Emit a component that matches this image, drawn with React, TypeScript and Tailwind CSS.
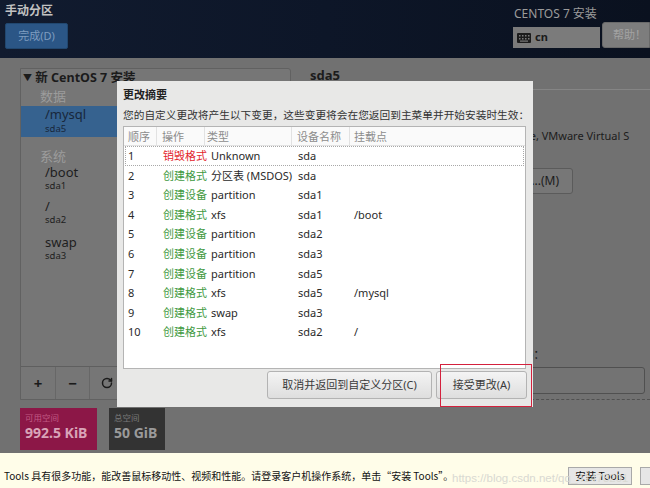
import React from 'react'
import { RotateCw } from 'lucide-react'

const ROWS: [string, 'red' | 'green', string, string, string][] = [
  ['1', 'red', '销毁格式', 'Unknown', 'sda'],
  ['2', 'green', '创建格式', '分区表 (MSDOS)', 'sda'],
  ['3', 'green', '创建设备', 'partition', 'sda1'],
  ['4', 'green', '创建格式', 'xfs', 'sda1'],
  ['5', 'green', '创建设备', 'partition', 'sda2'],
  ['6', 'green', '创建设备', 'partition', 'sda3'],
  ['7', 'green', '创建设备', 'partition', 'sda5'],
  ['8', 'green', '创建格式', 'xfs', 'sda5'],
  ['9', 'green', '创建格式', 'swap', 'sda3'],
  ['10', 'green', '创建格式', 'xfs', 'sda2'],
]

const MOUNTS: Record<string, string> = { '4': '/boot', '8': '/mysql', '10': '/' }

const MOUNT_POINTS = [
  { path: '/boot', dev: 'sda1', top: 'mt-[0px]' },
  { path: '/', dev: 'sda2', top: 'mt-[6px]' },
  { path: 'swap', dev: 'sda3', top: 'mt-[8px]' },
]

function KeyboardIcon() {
  return (
    <svg width="14" height="10" viewBox="0 0 14 10">
      <rect x="0" y="0" width="14" height="10" rx="1" fill="#1c1c1c" />
      <g fill="#7b7b7b">
        <rect x="2" y="2" width="1.5" height="1.5" />
        <rect x="5" y="2" width="1.5" height="1.5" />
        <rect x="8" y="2" width="1.5" height="1.5" />
        <rect x="11" y="2" width="1.5" height="1.5" />
        <rect x="2" y="5" width="1.5" height="1.5" />
        <rect x="5" y="5" width="1.5" height="1.5" />
        <rect x="8" y="5" width="1.5" height="1.5" />
        <rect x="11" y="5" width="1.5" height="1.5" />
        <rect x="3" y="7.5" width="8" height="1.2" />
      </g>
    </svg>
  )
}

function SummaryDialog() {
  return (
    <div className="absolute left-[117px] top-[81px] w-[416px] h-[326px] bg-[#e8e8e7] px-[6px] pt-[7px] text-[#2b2b2b]">
      <div className="text-[11px] leading-[14px] font-bold text-[#222]">更改摘要</div>
      <div className="mt-[6px] text-[10.7px] leading-[14px] whitespace-nowrap text-[#333]">
        您的自定义更改将产生以下变更，这些变更将会在您返回到主菜单并开始安装时生效：
      </div>

      {/* 表格 */}
      <div className="mt-[4px] w-[403px] h-[243px] bg-white border border-[#b4b4b4]">
        <div className="grid grid-cols-[33px_48px_87px_58px_1fr] h-[19px] bg-[#fafafa] border-b border-[#e2e2e2] text-[11px] leading-[19px] text-[#8c8c8c]">
          <div className="pl-[4px] border-r border-[#e2e2e2]">顺序</div>
          <div className="pl-[5px] border-r border-[#e2e2e2]">操作</div>
          <div className="pl-[2px] border-r border-[#e2e2e2]">类型</div>
          <div className="pl-[5px] border-r border-[#e2e2e2]">设备名称</div>
          <div className="pl-[4px]">挂载点</div>
        </div>
        {ROWS.map(([n, color, op, type, dev]) => (
          <div
            key={n}
            className={`grid grid-cols-[33px_48px_87px_58px_1fr] h-[19.6px] text-[11px] leading-[18px] text-[#2a2a2a] ${
              n === '1' ? 'mx-[1px] border border-dotted border-[#a8a8a8]' : 'mx-[1px] border border-transparent'
            }`}
          >
            <div className="pl-[2px]">{n}</div>
            <div className={`pl-[4px] ${color === 'red' ? 'text-[#e3262e]' : 'text-[#3f9a3f]'}`}>{op}</div>
            <div className="pl-[4px] whitespace-nowrap">{type}</div>
            <div className="pl-[4px]">{dev}</div>
            <div className="pl-[2px]">{MOUNTS[n] ?? ''}</div>
          </div>
        ))}
      </div>

      {/* 按钮 */}
      <div className="mt-[2px] flex justify-end gap-[4px]">
        <button className="w-[165px] h-[28px] rounded-[3px] border border-[#b3b3b3] bg-gradient-to-b from-[#f4f4f4] to-[#dedede] text-[11px] text-[#3a3a3a]">
          取消并返回到自定义分区(C)
        </button>
        <button className="w-[91px] h-[28px] rounded-[3px] border border-[#b3b3b3] bg-gradient-to-b from-[#f4f4f4] to-[#dedede] text-[11px] text-[#3a3a3a]">
          接受更改(A)
        </button>
      </div>
    </div>
  )
}

export default function App() {
  return (
    <div className="relative w-[650px] h-[488px] overflow-hidden font-['Noto_Sans','Noto_Sans_CJK_SC',sans-serif] bg-[#717171]">
      {/* 顶栏 */}
      <div className="h-[58px] flex justify-between bg-gradient-to-r from-[#111b2f] via-[#0d1628] to-[#0a111f]">
        <div className="pl-[5px] pt-[3px]">
          <div className="text-[12px] leading-[16px] font-bold text-[#c2c2c2]">手动分区</div>
          <button className="mt-[4px] w-[63px] h-[26px] rounded-[2px] bg-[#2b5686] border border-[#21476f] text-[11px] text-[#7f9dc0]">
            完成(D)
          </button>
        </div>
        <div className="w-[137px] pt-[6px]">
          <div className="pl-[1px] text-[12px] leading-[16px] text-[#9b9b9b]">CENTOS 7 安装</div>
          <div className="flex items-end">
            <div className="w-[87px] h-[21px] bg-[#7b7b7b] flex items-center gap-[4px] pl-[4px]">
              <KeyboardIcon />
              <span className="text-[11px] font-bold text-[#1a1a1a]">cn</span>
            </div>
            <button className="ml-[2px] w-[48px] h-[26px] rounded-l-[3px] bg-[#7d7d7d] border border-[#6a6a6a] text-[11px] text-[#a3a3a3] text-left pl-[10px]">
              帮助！
            </button>
          </div>
        </div>
      </div>

      {/* 主区域 */}
      <div className="h-[395px] flex">
        <div className="pl-[20px] pt-[10px]">
          <div className="w-[271px] h-[332px] bg-[#767676] border border-[#616161] rounded-tr-[3px] flex flex-col">
            <div className="flex-1">
              <div className="pl-[2px] pt-[1px] text-[12.5px] leading-[16px] font-bold text-[#1b1b1b] whitespace-nowrap">
                <span className="text-[9px] align-[1px]">▼</span> 新 CentOS 7 安装
              </div>
              <div className="pl-[19px] mt-[2px] text-[13px] leading-[16px] text-[#9c9c9c]">数据</div>
              <div className="mt-[2px] h-[31px] bg-[#36628f] pl-[24px]">
                <div className="text-[13px] leading-[17px] text-[#18273b]">/mysql</div>
                <div className="text-[9.5px] leading-[12px] text-[#18273b]">sda5</div>
              </div>
              <div className="pl-[19px] mt-[11px] text-[13px] leading-[16px] text-[#9c9c9c]">系统</div>
              {MOUNT_POINTS.map((m) => (
                <div key={m.path} className={`pl-[24px] ${m.top}`}>
                  <div className="text-[13px] leading-[16px] text-[#1e1e1e]">{m.path}</div>
                  <div className="text-[9.5px] leading-[12px] text-[#1e1e1e]">{m.dev}</div>
                </div>
              ))}
            </div>
            <div className="h-[33px] border-t border-[#5f5f5f] flex">
              <div className="w-[35px] border-r border-[#676767] flex items-center justify-center text-[15px] font-bold text-[#1b1b1b]">+</div>
              <div className="w-[34px] border-r border-[#676767] flex items-center justify-center text-[15px] font-bold text-[#1b1b1b]">−</div>
              <div className="w-[34px] border-r border-[#676767] flex items-center justify-center text-[#1b1b1b]">
                <RotateCw size={12} strokeWidth={3} />
              </div>
            </div>
          </div>
          <div className="mt-[8px] flex gap-[12px]">
            <div className="w-[77px] h-[42px] bg-[#8c1747] pl-[5px] pt-[4px]">
              <div className="text-[8.5px] leading-[11px] text-[#c15a85]">可用空间</div>
              <div className="text-[14px] leading-[20px] font-bold text-[#d9a4b8] whitespace-nowrap">992.5 KiB</div>
            </div>
            <div className="w-[56px] h-[42px] bg-[#333333] pl-[5px] pt-[4px]">
              <div className="text-[8.5px] leading-[11px] text-[#7a7a7a]">总空间</div>
              <div className="text-[14px] leading-[20px] font-bold text-[#9a9a9a] whitespace-nowrap">50 GiB</div>
            </div>
          </div>
        </div>

        {/* 右侧详情 */}
        <div className="flex-1 pl-[19px] pt-[9px] text-[#1c1c1c]">
          <div className="text-[13px] leading-[16px] font-bold">sda5</div>
          <div className="mt-[6px] h-px bg-[#858585]" />
          <div className="mt-[38px] pl-[184px] text-[11px] leading-[16px] whitespace-nowrap">VMware, VMware Virtual S</div>
          <div className="mt-[24px] ml-[150px] w-[113px] h-[26px] rounded-[3px] border border-[#5b5b5b] bg-[#777] text-[12px] leading-[24px] text-[#1c1c1c] text-right pr-[13px]">
            修改...(M)
          </div>
          <div className="mt-[154px] pl-[183px] text-[12px] leading-[14px] whitespace-nowrap">名称(N)：</div>
          <div className="mt-[5px] ml-[100px] w-[235px] h-[27px] rounded-[3px] border border-[#505050] bg-[#737373]" />
          <div className="mt-[5px] ml-[100px] border-t border-dashed border-[#505050]" />
        </div>
      </div>

      {/* VMware 提示条 */}
      <div className="h-[35px] bg-[#fffde9] flex items-end pb-[3px] font-['Noto_Sans_CJK_SC',sans-serif]">
        <div className="pl-[4px] pb-[2px] text-[10px] leading-[14px] text-[#111] whitespace-nowrap">
          Tools 具有很多功能，能改善鼠标移动性、视频和性能。请登录客户机操作系统，单击“安装 Tools”。
        </div>
        <div className="flex-1" />
        <button className="w-[64px] h-[18px] bg-[#e6e6e6] border border-[#a9a9a9] text-[10.5px] text-[#111]">
          安装 Tools
        </button>
        <button className="ml-[8px] w-[10px] h-[18px] bg-[#e6e6e6] border border-[#a9a9a9] border-r-0" />
      </div>

      <SummaryDialog />

      {/* 标注框与水印 */}
      <div className="absolute left-[440px] top-[364px] w-[92px] h-[43px] border-[1.5px] border-[#d4213d]" />
      <div className="absolute left-[452px] top-[470px] text-[11.5px] text-[#d9d9d2] whitespace-nowrap font-['Liberation_Sans',sans-serif]">
        https://blog.csdn.net/qq_41478201
      </div>
    </div>
  )
}
